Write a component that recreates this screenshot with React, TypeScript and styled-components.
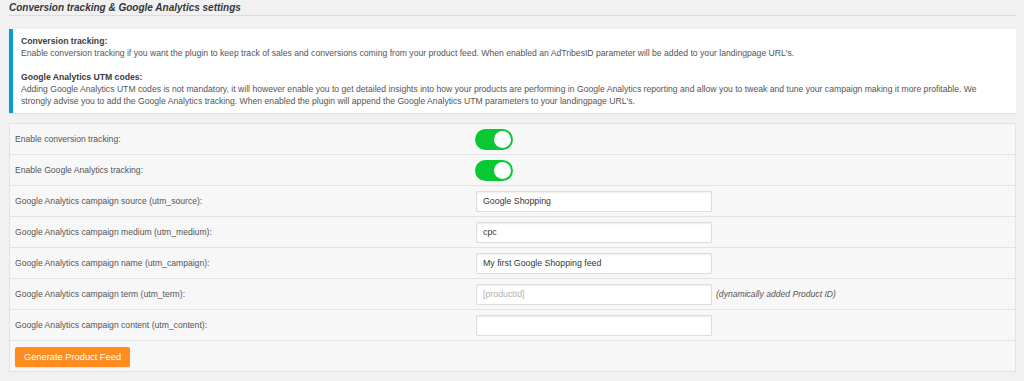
import React from 'react';
import styled, { createGlobalStyle } from 'styled-components';

const GlobalStyle = createGlobalStyle`
  html, body {
    margin: 0;
    padding: 0;
    background: #f1f1f1;
  }
  body {
    font-family: "Liberation Sans", Arial, sans-serif;
    color: #444;
  }
`;

const Page = styled.div`
  padding: 0 8px 10px 9px;
`;

const Title = styled.h3`
  margin: 0;
  padding: 2px 0 2px;
  font-size: 10px;
  line-height: 11px;
  font-weight: bold;
  font-style: italic;
  color: #32373c;
  border-bottom: 1px solid #dcdcdc;
`;

const Notice = styled.div`
  margin-top: 13px;
  background: #fff;
  border-left: 4px solid #00a0d2;
  box-shadow: 0 1px 1px rgba(0, 0, 0, 0.06);
  padding: 6px 12px 6px 8px;
  font-size: 8.65px;
  line-height: 12px;
  color: #555;

  strong {
    color: #3c3c3c;
  }
`;

const Gap = styled.div`
  height: 12px;
`;

const Table = styled.div`
  margin-top: 10px;
  background: #f7f7f7;
  border: 1px solid #e3e3e3;
`;

const Row = styled.div`
  display: grid;
  grid-template-columns: 461px 1fr;
  align-items: center;
  height: 30px;
  padding-left: 5px;
  & + & {
    border-top: 1px solid #e3e3e3;
  }
`;

const Label = styled.div`
  font-size: 8.6px;
  color: #555;
`;

const Value = styled.div`
  display: flex;
  align-items: center;
  gap: 4px;
`;

const Toggle = styled.span<{ $on: boolean }>`
  position: relative;
  display: inline-block;
  box-sizing: border-box;
  width: 38px;
  height: 21px;
  margin-left: -1px;
  border-radius: 11px;
  background: ${(p) => (p.$on ? '#08c934' : '#ccc')};

  &::after {
    content: '';
    position: absolute;
    top: 2px;
    left: ${(p) => (p.$on ? '19px' : '2px')};
    width: 17px;
    height: 17px;
    border-radius: 50%;
    background: #fff;
  }
`;

const Input = styled.input`
  box-sizing: border-box;
  width: 236px;
  height: 21px;
  margin: 0;
  padding: 0 6px;
  background: #fff;
  border: 1px solid #dcdcdc;
  border-radius: 1px;
  box-shadow: inset 0 1px 2px rgba(0, 0, 0, 0.07);
  font-family: "Liberation Sans", Arial, sans-serif;
  font-size: 8.8px;
  color: #32373c;
  outline: none;

  &::placeholder {
    color: #b0b0b0;
  }
`;

const Hint = styled.span`
  font-size: 8.6px;
  font-style: italic;
  color: #555;
`;

const Button = styled.button`
  margin: 0;
  padding: 0;
  height: 20px;
  width: 115px;
  border: none;
  border-radius: 2px;
  background: #ff8c1f;
  box-shadow: 0 1px 1px rgba(0, 0, 0, 0.1);
  color: #fff;
  font-family: "Liberation Sans", Arial, sans-serif;
  font-size: 9.3px;
  white-space: nowrap;
  cursor: pointer;
`;

const ButtonRow = styled(Row)`
  grid-template-columns: 1fr;
`;

type Field = {
  label: string;
  value?: string;
  placeholder?: string;
  hint?: string;
};

const fields: Field[] = [
  { label: 'Google Analytics campaign source (utm_source):', value: 'Google Shopping' },
  { label: 'Google Analytics campaign medium (utm_medium):', value: 'cpc' },
  { label: 'Google Analytics campaign name (utm_campaign):', value: 'My first Google Shopping feed' },
  {
    label: 'Google Analytics campaign term (utm_term):',
    placeholder: '[productId]',
    hint: '(dynamically added Product ID)',
  },
  { label: 'Google Analytics campaign content (utm_content):', value: '' },
];

export default function App() {
  return (
    <Page>
      <GlobalStyle />
      <Title>Conversion tracking &amp; Google Analytics settings</Title>
      <Notice>
        <strong>Conversion tracking:</strong>
        <br />
        Enable conversion tracking if you want the plugin to keep track of sales and conversions coming from
        your product feed. When enabled an AdTribesID parameter will be added to your landingpage URL's.
        <Gap />
        <strong>Google Analytics UTM codes:</strong>
        <br />
        Adding Google Analytics UTM codes is not mandatory, it will however enable you to get detailed insights
        into how your products are performing in Google Analytics reporting and allow you to tweak and tune your
        campaign making it more profitable. We strongly advise you to add the Google Analytics tracking. When
        enabled the plugin will append the Google Analytics UTM parameters to your landingpage URL's.
      </Notice>
      <Table>
        <Row>
          <Label>Enable conversion tracking:</Label>
          <Value>
            <Toggle $on />
          </Value>
        </Row>
        <Row>
          <Label>Enable Google Analytics tracking:</Label>
          <Value>
            <Toggle $on />
          </Value>
        </Row>
        {fields.map((f) => (
          <Row key={f.label}>
            <Label>{f.label}</Label>
            <Value>
              <Input defaultValue={f.value} placeholder={f.placeholder} />
              {f.hint && <Hint>{f.hint}</Hint>}
            </Value>
          </Row>
        ))}
        <ButtonRow>
          <div>
            <Button>Generate Product Feed</Button>
          </div>
        </ButtonRow>
      </Table>
    </Page>
  );
}
